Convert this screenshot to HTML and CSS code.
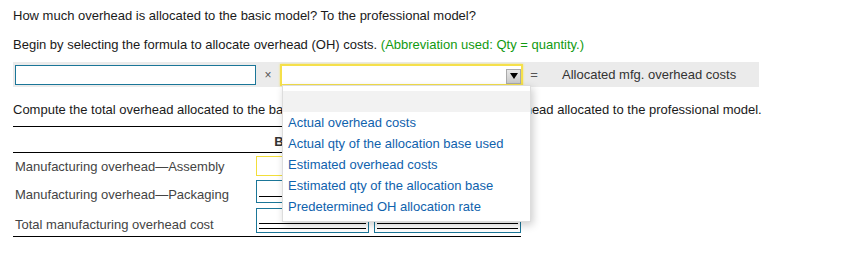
FILE: index.html
```html
<!DOCTYPE html>
<html>
<head>
<meta charset="utf-8">
<link rel="stylesheet" href="styles.css">
</head>
<body>
<div class="page">
  <p class="q">How much overhead is allocated to the basic model? To the professional model?</p>
  <p class="instr">Begin by selecting the formula to allocate overhead (OH) costs. <span class="green">(Abbreviation used: Qty = quantity.)</span></p>
  <div class="formula">
    <div class="inp first"></div>
    <div class="op times">×</div>
    <div class="sel">
      <div class="arrow"><span class="tri"></span></div>
      <div class="menu">
        <div class="blank"></div>
        <div class="item">Actual overhead costs</div>
        <div class="item">Actual qty of the allocation base used</div>
        <div class="item">Estimated overhead costs</div>
        <div class="item">Estimated qty of the allocation base</div>
        <div class="item">Predetermined OH allocation rate</div>
      </div>
    </div>
    <div class="op eq">=</div>
    <div class="result">Allocated mfg. overhead costs</div>
  </div>
  <p class="compute">Compute the total overhead allocated to the basic model and then compute the total overhead allocated to the professional model.</p>
  <div class="tbl">
    <div class="hdr">
      <div></div>
      <div class="colh">Basic model</div>
      <div></div>
      <div class="colh">Professional</div>
    </div>
    <div class="row r1">
      <div class="lbl">Manufacturing overhead—Assembly</div>
      <div class="cell"><div class="box yellow"></div></div>
      <div></div>
      <div class="cell"><div class="box"></div></div>
    </div>
    <div class="row r2">
      <div class="lbl">Manufacturing overhead—Packaging</div>
      <div class="cell"><div class="box single"></div></div>
      <div></div>
      <div class="cell"><div class="box single"></div></div>
    </div>
    <div class="row r3">
      <div class="lbl">Total manufacturing overhead cost</div>
      <div class="cell"><div class="box double"></div></div>
      <div></div>
      <div class="cell"><div class="box double"></div></div>
    </div>
  </div>
</div>
</body>
</html>
```

FILE: styles.css
```css
* { box-sizing: border-box; }
body {
  margin: 0;
  background: #fff;
  font-family: "Liberation Sans", Arial, sans-serif;
  font-size: 13px;
  color: #1a1a1a;
}
.page { padding: 8px 0 0 13px; }
p { margin: 0; line-height: 16px; }
.instr { margin-top: 13px; }
.green { color: #119a11; }

.formula {
  margin-top: 9px;
  width: 746px;
  height: 25px;
  background: #ebebeb;
  display: flex;
  align-items: center;
  padding-left: 2px;
}
.inp.first {
  width: 241px;
  height: 20px;
  background: #fff;
  border: 1px solid #1b7698;
}
.op {
  color: #555;
  text-align: center;
  line-height: 16px;
}
.times { width: 24px; font-size: 12px; }
.eq { width: 22px; }
.sel {
  position: relative;
  width: 243px;
  height: 22px;
  background: #fff;
  border: 2px solid #f5e04a;
  box-shadow: 0 0 2px rgba(245, 224, 74, 0.8);
}
.arrow {
  position: absolute;
  right: 0;
  bottom: 0;
  width: 15px;
  height: 15px;
  background: linear-gradient(#e8e8e8, #c9c9c9);
  border: 1px solid #aaa;
  display: flex;
  align-items: center;
  justify-content: center;
}
.tri {
  width: 0;
  height: 0;
  border-left: 4px solid transparent;
  border-right: 4px solid transparent;
  border-top: 6px solid #000;
}
.menu {
  position: absolute;
  left: 0;
  top: 19px;
  width: 249px;
  height: 137px;
  background: #fff;
  border: 1px solid #ddd;
  box-shadow: 2px 3px 8px rgba(0, 0, 0, 0.2);
  padding: 5px 0 0 0;
  z-index: 5;
}
.blank { height: 21px; background: #f2f2f2; }
.item {
  line-height: 21px;
  padding-left: 5px;
  color: #0f62ad;
  white-space: nowrap;
}
.result { margin-left: 17px; color: #333; }

.compute { margin-top: 15px; }

.tbl {
  margin-top: 8px;
  width: 508px;
  border-top: 1px solid #000;
  border-bottom: 1px solid #000;
}
.hdr, .row {
  display: grid;
  grid-template-columns: 243px 113px 5px 147px;
}
.hdr {
  height: 26px;
  border-bottom: 1px solid #000;
}
.colh {
  font-weight: bold;
  color: #333;
  text-align: center;
  padding-top: 7px;
  line-height: 16px;
  white-space: nowrap;
}
.lbl { color: #444; line-height: 16px; padding-left: 2px; }
.row.r1 { height: 26px; }
.row.r2 { height: 26px; }
.row.r3 { height: 31px; }
.r1 .lbl { padding-top: 6px; }
.r2 .lbl { padding-top: 8px; }
.r3 .lbl { padding-top: 12px; }
.box {
  border: 1px solid #1b7698;
  background: #fff;
  position: relative;
}
.r1 .box { margin-top: 3px; height: 20px; }
.r2 .box { margin-top: 1px; height: 23px; }
.r3 .box { margin-top: 3px; height: 25px; }
.box.yellow { border-color: #f2de3a; }
.box.single::after {
  content: "";
  position: absolute;
  left: 2px;
  right: 2px;
  bottom: 5px;
  border-bottom: 1px solid #000;
}
.box.double::after {
  content: "";
  position: absolute;
  left: 2px;
  right: 2px;
  bottom: 3px;
  height: 4px;
  border-top: 1px solid #000;
  border-bottom: 1px solid #000;
}
```
